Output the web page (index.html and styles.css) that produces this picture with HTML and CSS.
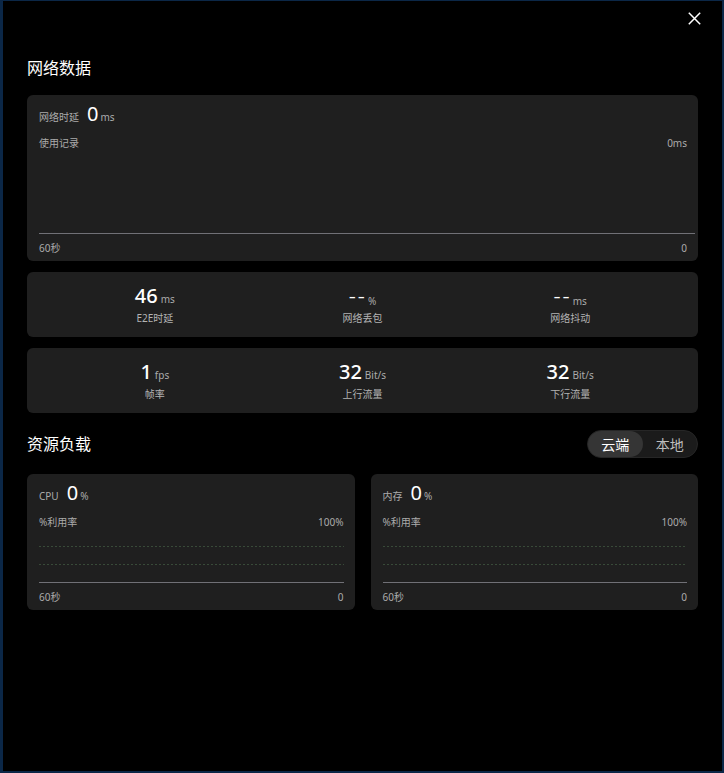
FILE: index.html
```html
<!DOCTYPE html>
<html lang="zh-CN">
<head>
<meta charset="utf-8">
<title>网络数据</title>
<link rel="stylesheet" href="styles.css">
</head>
<body>
<div class="frame">
  <button class="close" aria-label="关闭">
    <svg width="13" height="13" viewBox="0 0 13 13"><path d="M0.8 0.8L12.2 12.2M12.2 0.8L0.8 12.2" stroke="#fff" stroke-width="1.5" fill="none"/></svg>
  </button>

  <h2 class="section-title">网络数据</h2>

  <div class="card chart-card">
    <div class="metric-head"><span class="label">网络时延</span><span class="big">0</span><span class="unit">ms</span></div>
    <div class="axis-row top"><span>使用记录</span><span>0ms</span></div>
    <div class="plot plot-wide"></div>
    <div class="axis-row foot"><span>60秒</span><span>0</span></div>
  </div>

  <div class="card stats">
    <div class="stat"><div class="val"><span class="num">46</span><span class="unit">ms</span></div><div class="label">E2E时延</div></div>
    <div class="stat"><div class="val"><span class="num dash">--</span><span class="unit">%</span></div><div class="label">网络丢包</div></div>
    <div class="stat"><div class="val"><span class="num dash">--</span><span class="unit">ms</span></div><div class="label">网络抖动</div></div>
  </div>

  <div class="card stats">
    <div class="stat"><div class="val"><span class="num">1</span><span class="unit">fps</span></div><div class="label">帧率</div></div>
    <div class="stat"><div class="val"><span class="num">32</span><span class="unit">Bit/s</span></div><div class="label">上行流量</div></div>
    <div class="stat"><div class="val"><span class="num">32</span><span class="unit">Bit/s</span></div><div class="label">下行流量</div></div>
  </div>

  <div class="section-head">
    <h2 class="section-title">资源负载</h2>
    <div class="toggle"><span class="opt active">云端</span><span class="opt">本地</span></div>
  </div>

  <div class="res-grid">
    <div class="card chart-card">
      <div class="metric-head"><span class="label">CPU</span><span class="big">0</span><span class="unit">%</span></div>
      <div class="axis-row top"><span>%利用率</span><span>100%</span></div>
      <div class="plot plot-grid"><div class="grid-line"></div><div class="grid-line"></div></div>
      <div class="axis-row foot"><span>60秒</span><span>0</span></div>
    </div>
    <div class="card chart-card">
      <div class="metric-head"><span class="label">内存</span><span class="big">0</span><span class="unit">%</span></div>
      <div class="axis-row top"><span>%利用率</span><span>100%</span></div>
      <div class="plot plot-grid"><div class="grid-line"></div><div class="grid-line"></div></div>
      <div class="axis-row foot"><span>60秒</span><span>0</span></div>
    </div>
  </div>
</div>
</body>
</html>
```

FILE: styles.css
```css
html, body {
  margin: 0;
  padding: 0;
  background: #000;
}

body {
  font-family: "Noto Sans", "Noto Sans CJK SC", sans-serif;
  color: #fff;
}

.frame {
  position: relative;
  box-sizing: border-box;
  width: 724px;
  height: 773px;
  background: #000;
  border-style: solid;
  border-color: #0b2747;
  border-width: 1px 2px 2px 3px;
  padding: 56px 24px 0 24px;
}

.close {
  position: absolute;
  top: 11px;
  right: 21px;
  width: 13px;
  height: 13px;
  padding: 0;
  margin: 0;
  border: 0;
  background: transparent;
  display: block;
}
.close svg { display: block; }

.section-title {
  margin: 0;
  font-size: 16px;
  line-height: 22px;
  font-weight: 400;
  color: #fff;
}

.frame > .section-title { margin-bottom: 16px; }

.card {
  background: #1f1f1f;
  border-radius: 6px;
  box-sizing: border-box;
}

.chart-card {
  padding: 7px 11px 6px 12px;
}

.label {
  font-size: 10px;
  line-height: 14px;
  color: #ababab;
}

.metric-head {
  display: flex;
  align-items: baseline;
  height: 24px;
}
.metric-head .label { margin-right: 8px; }

.big {
  font-size: 20px;
  line-height: 24px;
  color: #fff;
}

.unit {
  font-size: 10px;
  line-height: 14px;
  color: #ababab;
  margin-left: 2px;
}

.axis-row {
  display: flex;
  justify-content: space-between;
  font-size: 10px;
  line-height: 14px;
  color: #ababab;
}
.axis-row.top { margin-top: 10px; }
.axis-row.foot { margin-top: 7px; }

.plot {
  border-bottom: 1px solid #707076;
}
.plot-wide {
  height: 83px;
  margin-right: -8px;
}
.plot-grid {
  padding-top: 17px;
  height: 36px;
}
.grid-line {
  height: 1px;
  margin-bottom: 17px;
  background: repeating-linear-gradient(to right, #384a38 0 2px, transparent 2px 4px);
}

.stats {
  height: 65px;
  margin-top: 11px;
  padding: 12px 24px 0 24px;
  display: grid;
  grid-template-columns: 1fr 1fr 1fr;
}

.stat {
  display: flex;
  flex-direction: column;
  align-items: center;
}
.val {
  display: flex;
  align-items: baseline;
  height: 24px;
}
.num {
  font-size: 20px;
  line-height: 24px;
  font-weight: 500;
  color: #fff;
}
.num.dash {
  font-weight: 400;
  font-size: 22px;
  letter-spacing: 2px;
  transform: scaleY(0.7);
}
.val .unit { margin-left: 3px; }
.num.dash + .unit { margin-left: 1px; }
.stat .label {
  margin-top: 3px;
  color: #b3b3b3;
}

.section-head {
  margin-top: 17px;
  display: flex;
  justify-content: space-between;
  align-items: center;
  height: 28px;
}

.toggle {
  display: flex;
  width: 111px;
  height: 28px;
  box-sizing: border-box;
  border-radius: 14px;
  background: #1b1b1b;
  border: 1px solid #262626;
}
.opt {
  flex: 1;
  display: flex;
  align-items: center;
  justify-content: center;
  border-radius: 14px;
  font-size: 14px;
  color: #bdbdbd;
}
.opt.active {
  background: #353535;
  color: #fff;
}

.res-grid {
  margin-top: 16px;
  display: grid;
  grid-template-columns: 1fr 1fr;
  gap: 16px;
}
```
